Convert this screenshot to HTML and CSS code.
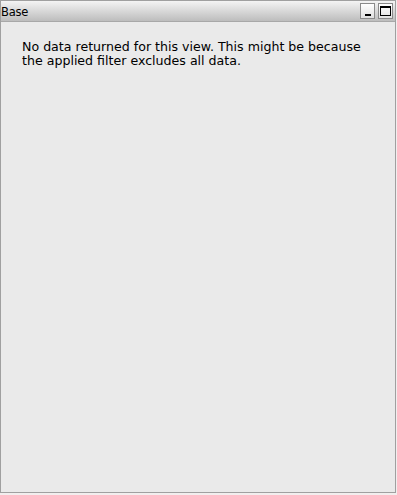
FILE: index.html
```html
<!DOCTYPE html>
<html>
<head>
<meta charset="utf-8">
<link rel="stylesheet" href="styles.css">
</head>
<body>
<div class="window">
  <div class="titlebar">
    <span class="title">Base</span>
    <div class="buttons">
      <span class="btn"><span class="min-icon"></span></span>
      <span class="btn"><span class="max-icon"></span></span>
    </div>
  </div>
  <div class="content">
    <p class="msg">No data returned for this view. This might be because the applied filter excludes all data.</p>
  </div>
</div>
</body>
</html>
```
FILE: styles.css
```css
html, body { margin: 0; padding: 0; background: #f2eeee; }
.window {
  width: 394px;
  height: 491px;
  border: 1px solid #a0a0a0;
  background: #eaeaea;
  display: flex;
  flex-direction: column;
}
.titlebar {
  height: 20px;
  border-bottom: 1px solid #a8a8a8;
  background: linear-gradient(#f4f4f4, #bdbdbd);
  display: flex;
  align-items: center;
  justify-content: space-between;
}
.title {
  font-family: "DejaVu Sans", Verdana, sans-serif;
  font-size: 11.5px;
  color: #000;
  letter-spacing: -0.2px;
  padding-top: 1px;
}
.buttons { display: flex; gap: 3px; padding-right: 2px; }
.btn {
  width: 13px;
  height: 14px;
  border: 1px solid #8a8a8a;
  background: linear-gradient(#ffffff, #e0e0e0);
  position: relative;
  display: block;
}
.min-icon {
  position: absolute;
  left: 4px;
  bottom: 2px;
  width: 6px;
  height: 2px;
  background: #000;
}
.max-icon {
  position: absolute;
  left: 1px;
  top: 2px;
  width: 9px;
  height: 7px;
  border: 1px solid #000;
  border-top-width: 2px;
}
.content { flex: 1; padding: 18px 21px; }
.msg {
  margin: 0;
  width: 345px;
  font-family: "DejaVu Sans", Verdana, sans-serif;
  font-size: 12.6px;
  line-height: 14px;
  color: #000;
}
```
